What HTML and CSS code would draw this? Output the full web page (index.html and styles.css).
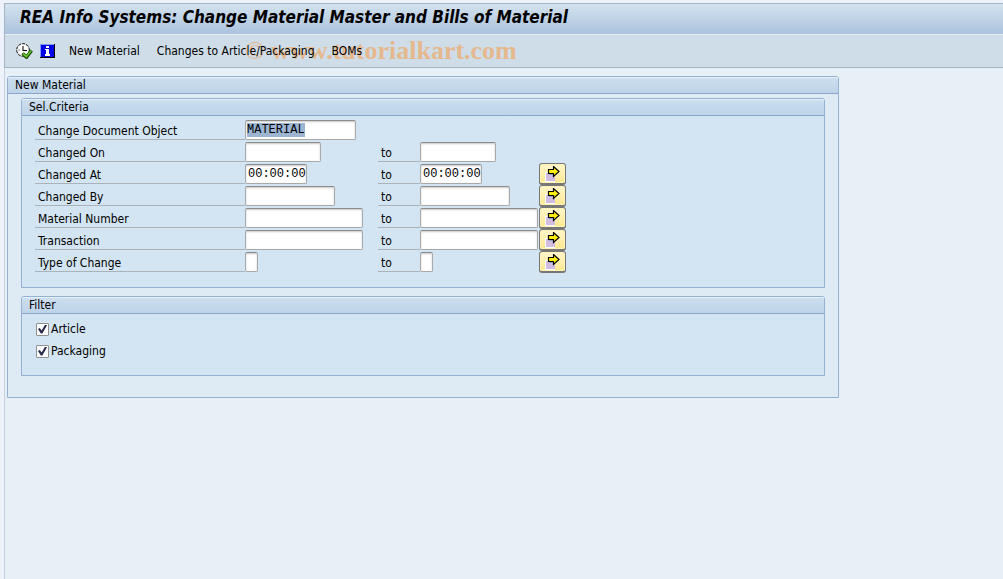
FILE: index.html
```html
<!DOCTYPE html>
<html lang="en">
<head>
    <meta charset="UTF-8">
    <meta name="viewport" content="width=device-width, initial-scale=1.0">
    <title>REA Info Systems: Change Material Master and Bills of Material</title>
    <link rel="stylesheet" href="styles.css">
</head>
<body>
    <!-- Shared icon for the multiple selection buttons -->
    <svg class="defs" width="0" height="0" aria-hidden="true">
        <symbol id="arrow" viewBox="0 0 16 16">
            <path fill="#fff" d="M0 6h10v10H0z"/>
            <path fill="#d2bcdf" d="M1 7h9v8H1z"/>
            <path fill="#8fa5c4" d="M4 7h4v2H4z"/>
            <path fill="#ffee00" stroke="#000" stroke-width="1.200" d="M3.500 3.500h5v-3l5.500 5-5.500 5v-3h-5z"/>
        </symbol>
    </svg>

    <header>
        <h1>REA Info Systems: Change Material Master and Bills of Material</h1>
        <nav class="toolbar">
            <span class="watermark"><span>©</span> www.tutorialkart.com</span>
            <button type="button" class="icon" aria-label="Execute">
                <svg width="17" height="16" viewBox="0 0 17 16">
                    <circle cx="7" cy="7" r="6.300" fill="#fff" stroke="#000" stroke-dasharray="3 1"/>
                    <path d="M7 3v5M7 7.500h4" stroke="#000" fill="none"/>
                    <path d="M2.500 7h1M7 10.500v1" stroke="#000"/>
                    <path d="M6.500 10.500l4 3.500 5-6.500" stroke="#1b4b00" stroke-width="3.600" fill="none"/>
                    <path d="M7 10.800l3.400 2.700 4.600-5.700" stroke="#66c332" stroke-width="1.800" fill="none"/>
                </svg>
            </button>
            <button type="button" class="icon" aria-label="Information">
                <svg width="15" height="14" viewBox="0 0 15 14">
                    <path fill="#000" d="M0 0h15v14H0z"/>
                    <path fill="#7d9cff" d="M0 0h14v1H1v12H0z"/>
                    <path fill="#0000e6" d="M1 1h13v12H1z"/>
                    <path fill="#fff" d="M6 2h3v2H6zM5 5h4v5h1v2H5v-2h1V6H5z"/>
                </svg>
            </button>
            <button type="button">New Material</button>
            <button type="button">Changes to Article/Packaging</button>
            <button type="button">BOMs</button>
        </nav>
    </header>

    <main>
        <section class="group outer">
            <h2>New Material</h2>

            <section class="group">
                <h2>Sel.Criteria</h2>
                <div class="criteria">
                    <div class="row">
                        <label for="object">Change Document Object</label>
                        <div class="field"><input type="text" id="object" class="w-object" value="MATERIAL"></div>
                    </div>
                    <div class="row">
                        <label for="date-from">Changed On</label>
                        <div class="field"><input type="text" id="date-from" class="w-date"></div>
                        <label for="date-to">to</label>
                        <div class="field"><input type="text" id="date-to" class="w-date"></div>
                    </div>
                    <div class="row">
                        <label for="time-from">Changed At</label>
                        <div class="field"><input type="text" id="time-from" class="w-time" value="00:00:00"></div>
                        <label for="time-to">to</label>
                        <div class="field"><input type="text" id="time-to" class="w-time" value="00:00:00"></div>
                        <button type="button" class="multi" aria-label="Multiple selection"><svg width="16" height="16"><use href="#arrow"/></svg></button>
                    </div>
                    <div class="row">
                        <label for="user-from">Changed By</label>
                        <div class="field"><input type="text" id="user-from" class="w-user"></div>
                        <label for="user-to">to</label>
                        <div class="field"><input type="text" id="user-to" class="w-user"></div>
                        <button type="button" class="multi" aria-label="Multiple selection"><svg width="16" height="16"><use href="#arrow"/></svg></button>
                    </div>
                    <div class="row">
                        <label for="material-from">Material Number</label>
                        <div class="field"><input type="text" id="material-from" class="w-long"></div>
                        <label for="material-to">to</label>
                        <div class="field"><input type="text" id="material-to" class="w-long"></div>
                        <button type="button" class="multi" aria-label="Multiple selection"><svg width="16" height="16"><use href="#arrow"/></svg></button>
                    </div>
                    <div class="row">
                        <label for="tcode-from">Transaction</label>
                        <div class="field"><input type="text" id="tcode-from" class="w-long"></div>
                        <label for="tcode-to">to</label>
                        <div class="field"><input type="text" id="tcode-to" class="w-long"></div>
                        <button type="button" class="multi" aria-label="Multiple selection"><svg width="16" height="16"><use href="#arrow"/></svg></button>
                    </div>
                    <div class="row">
                        <label for="type-from">Type of Change</label>
                        <div class="field"><input type="text" id="type-from" class="w-char"></div>
                        <label for="type-to">to</label>
                        <div class="field"><input type="text" id="type-to" class="w-char"></div>
                        <button type="button" class="multi" aria-label="Multiple selection"><svg width="16" height="16"><use href="#arrow"/></svg></button>
                    </div>
                </div>
            </section>

            <section class="group">
                <h2>Filter</h2>
                <div class="filter">
                    <label><input type="checkbox" checked>Article</label>
                    <label><input type="checkbox" checked>Packaging</label>
                </div>
            </section>
        </section>
    </main>

    <script src="script.js"></script>
</body>
</html>
```
FILE: styles.css
```css
* {
    box-sizing: border-box;
}

body {
    margin: 0;
    padding: 3px 0 0 4px;
    min-height: 100vh;
    display: flex;
    flex-direction: column;
    background-color: #eef2fa;
    font-family: "DejaVu Sans Condensed", "DejaVu Sans", sans-serif;
    font-stretch: condensed;
    font-size: 12px;
    color: #000;
}

.defs {
    position: absolute;
}

header {
    border: 1px solid #a3b4c6;
    border-right: none;
}

h1 {
    margin: 0;
    height: 31px;
    padding: 0 15px;
    border-bottom: 1px solid #e6eef6;
    background: linear-gradient(#d3e2ee, #abc3de);
    font-size: 17px;
    font-style: italic;
    line-height: 26px;
    white-space: nowrap;
}

.toolbar {
    position: relative;
    display: flex;
    align-items: center;
    height: 32px;
    padding: 0 11px;
    background-color: #cfdde8;
}

.toolbar button {
    position: relative;
    padding: 0;
    margin-right: 17px;
    border: none;
    background: none;
    font: inherit;
    white-space: nowrap;
}

.toolbar .icon {
    display: flex;
    margin-right: 7px;
}

.toolbar .icon + .icon {
    margin-right: 14px;
}

/* Printed under the toolbar buttons */
.watermark {
    position: absolute;
    left: 240px;
    top: 0;
    font-family: "Liberation Serif", serif;
    font-size: 26px;
    font-weight: bold;
    line-height: 32px;
    color: #e5b88d;
}

.watermark span {
    font-weight: normal;
}

main {
    flex: 1;
    padding: 8px 2px;
    border-left: 1px solid #c3d3e2;
    background-color: #e7eff7;
}

.group {
    margin: 4px 13px 8px;
    border: 1px solid #93b2d2;
    border-radius: 3px 3px 0 0;
    background-color: #d3e5f2;
}

.group.outer {
    max-width: 832px;
    margin: 0;
    padding-bottom: 13px;
    background-color: #deeaf4;
}

.group h2 {
    margin: 0;
    height: 17px;
    padding: 0 7px;
    border-bottom: 1px solid #8aa6c8;
    border-radius: 2px 2px 0 0;
    background: linear-gradient(#cddff0, #bdd3e9);
    box-shadow: inset 0 1px #e6f1fa;
    font-size: 12px;
    font-weight: normal;
    line-height: 16px;
}

.criteria {
    padding: 3px 13px 14px;
}

.row {
    display: grid;
    grid-template-columns: 210px 133px 42px 119px 27px;
    height: 22px;
}

.row label {
    height: 21px;
    padding-left: 3px;
    border-bottom: 1px solid #aab3ba;
    line-height: 24px;
}

.field {
    padding-top: 1px;
}

.field input {
    display: block;
    height: 20px;
    padding: 0 1px;
    border: 1px solid #a8a8a8;
    border-top-color: #8c8c8c;
    border-radius: 2px;
    background-color: #fff;
    box-shadow: inset 0 1px 2px #c8c8c8;
    font-family: "Liberation Mono", monospace;
    font-size: 12px;
    outline: none;
}

.field input::selection {
    background-color: #9bb5d3;
    color: #000;
}

.field .w-object { width: 111px; }
.field .w-date { width: 76px; }
.field .w-user { width: 90px; }
.field .w-long { width: 118px; }
.field .w-char { width: 13px; }

.field .w-time {
    width: 62px;
    padding: 0 0 0 2px;
}

.multi {
    display: flex;
    align-items: center;
    justify-content: center;
    height: 22px;
    padding: 0;
    border: 1px solid #777;
    border-bottom-width: 2px;
    border-radius: 3px;
    background: linear-gradient(#fff6cc, #fde98f);
    box-shadow: inset 0 0 0 1px #fff3b8;
}

.filter {
    padding: 4px 14px 13px;
}

.filter label {
    display: flex;
    align-items: center;
    gap: 2px;
    height: 22px;
}

.filter input {
    appearance: none;
    display: grid;
    place-items: center;
    width: 13px;
    height: 13px;
    margin: 0;
    border: 1px solid #8e8f8f;
    border-radius: 1px;
    background: #fff;
}

.filter input:checked::before {
    content: "";
    width: 9px;
    height: 9px;
    background-color: #28284a;
    clip-path: polygon(0 50%, 20% 40%, 40% 68%, 80% 0, 100% 8%, 48% 100%, 32% 100%);
}
```
FILE: script.js
```js
// The first field is selected when the screen opens
document.getElementById('object').select();
```
